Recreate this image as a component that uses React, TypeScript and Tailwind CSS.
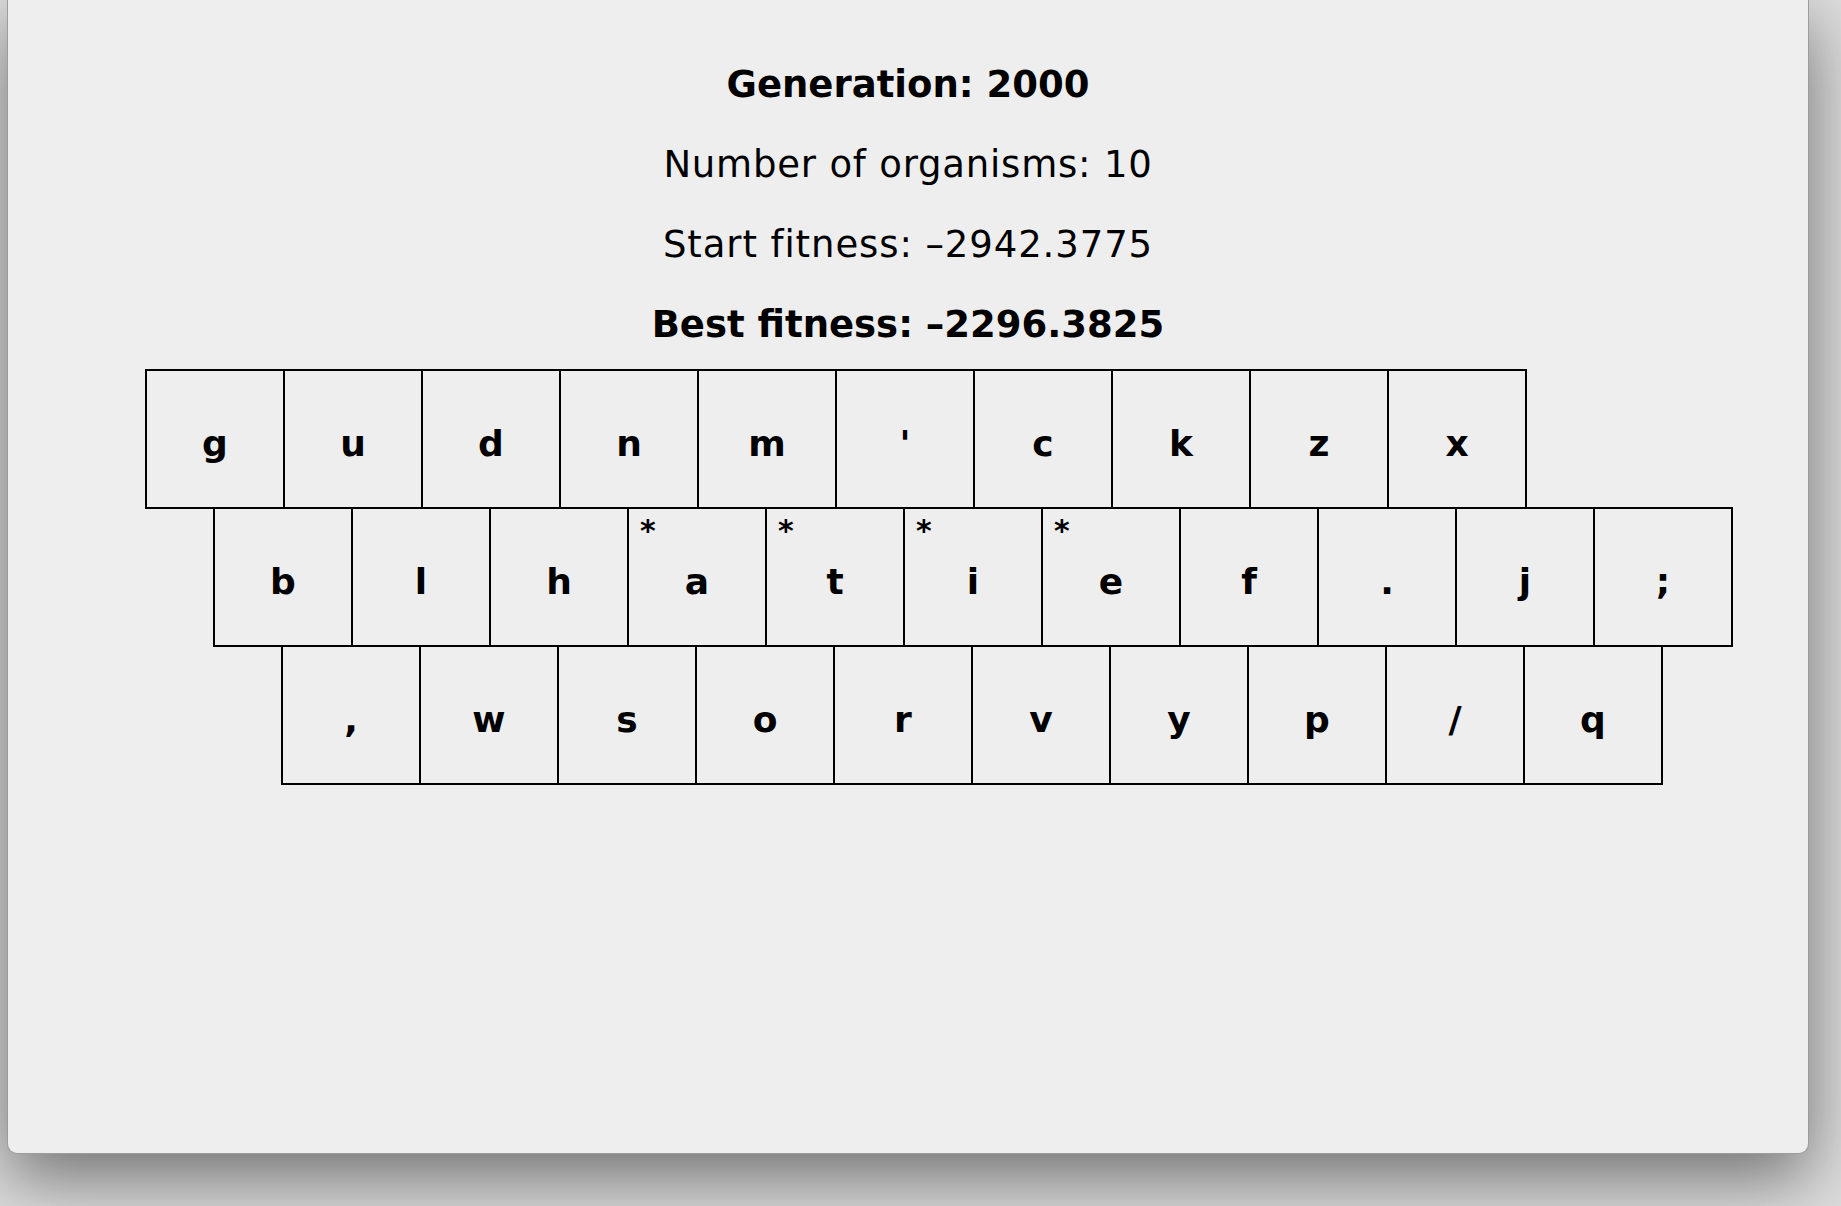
import React from 'react';

const rows: { offset: string; keys: string[] }[] = [
  { offset: 'ml-[137px]', keys: ['g', 'u', 'd', 'n', 'm', "'", 'c', 'k', 'z', 'x'] },
  { offset: 'ml-[205px]', keys: ['b', 'l', 'h', 'a', 't', 'i', 'e', 'f', '.', 'j', ';'] },
  { offset: 'ml-[273px]', keys: [',', 'w', 's', 'o', 'r', 'v', 'y', 'p', '/', 'q'] },
];

// home keys get a little star in the corner
const marked = ['a', 't', 'i', 'e'];

function Key({ label, first }: { label: string; first: boolean }) {
  return (
    <div
      className={`relative w-[140px] h-[140px] border-2 border-black flex justify-center pt-[55px] ${first ? '' : '-ml-[2px]'}`}
    >
      {marked.includes(label) && (
        <span className="absolute left-[11px] top-[7px] text-[30px] font-bold leading-none">*</span>
      )}
      <span className="text-[36px] font-bold leading-none">{label}</span>
    </div>
  );
}

export default function App() {
  return (
    <div
      className="w-full h-[1206px] overflow-hidden bg-[#dedede] text-black"
      style={{ fontFamily: '"DejaVu Sans", "Liberation Sans", sans-serif' }}
    >
      <div className="ml-[7px] w-[1802px] h-[1154px] bg-[#eeeeee] rounded-b-[10px] border-x border-b border-[#9c9c9c] shadow-[0_24px_70px_rgba(0,0,0,0.5)] pt-[45px]">
        <div className="flex flex-col items-center text-[37px] leading-[80px]">
          <p className="font-bold">Generation: 2000</p>
          <p className="tracking-[0.8px]">Number of organisms: 10</p>
          <p className="tracking-[0.9px]">Start fitness: –2942.3775</p>
          <p className="font-bold">Best fitness: –2296.3825</p>
        </div>

        <div className="mt-[4px] flex flex-col">
          {rows.map((row, i) => (
            <div key={i} className={`flex ${row.offset} ${i > 0 ? '-mt-[2px]' : ''}`}>
              {row.keys.map((k, j) => (
                <Key key={k} label={k} first={j === 0} />
              ))}
            </div>
          ))}
        </div>
      </div>
    </div>
  );
}
